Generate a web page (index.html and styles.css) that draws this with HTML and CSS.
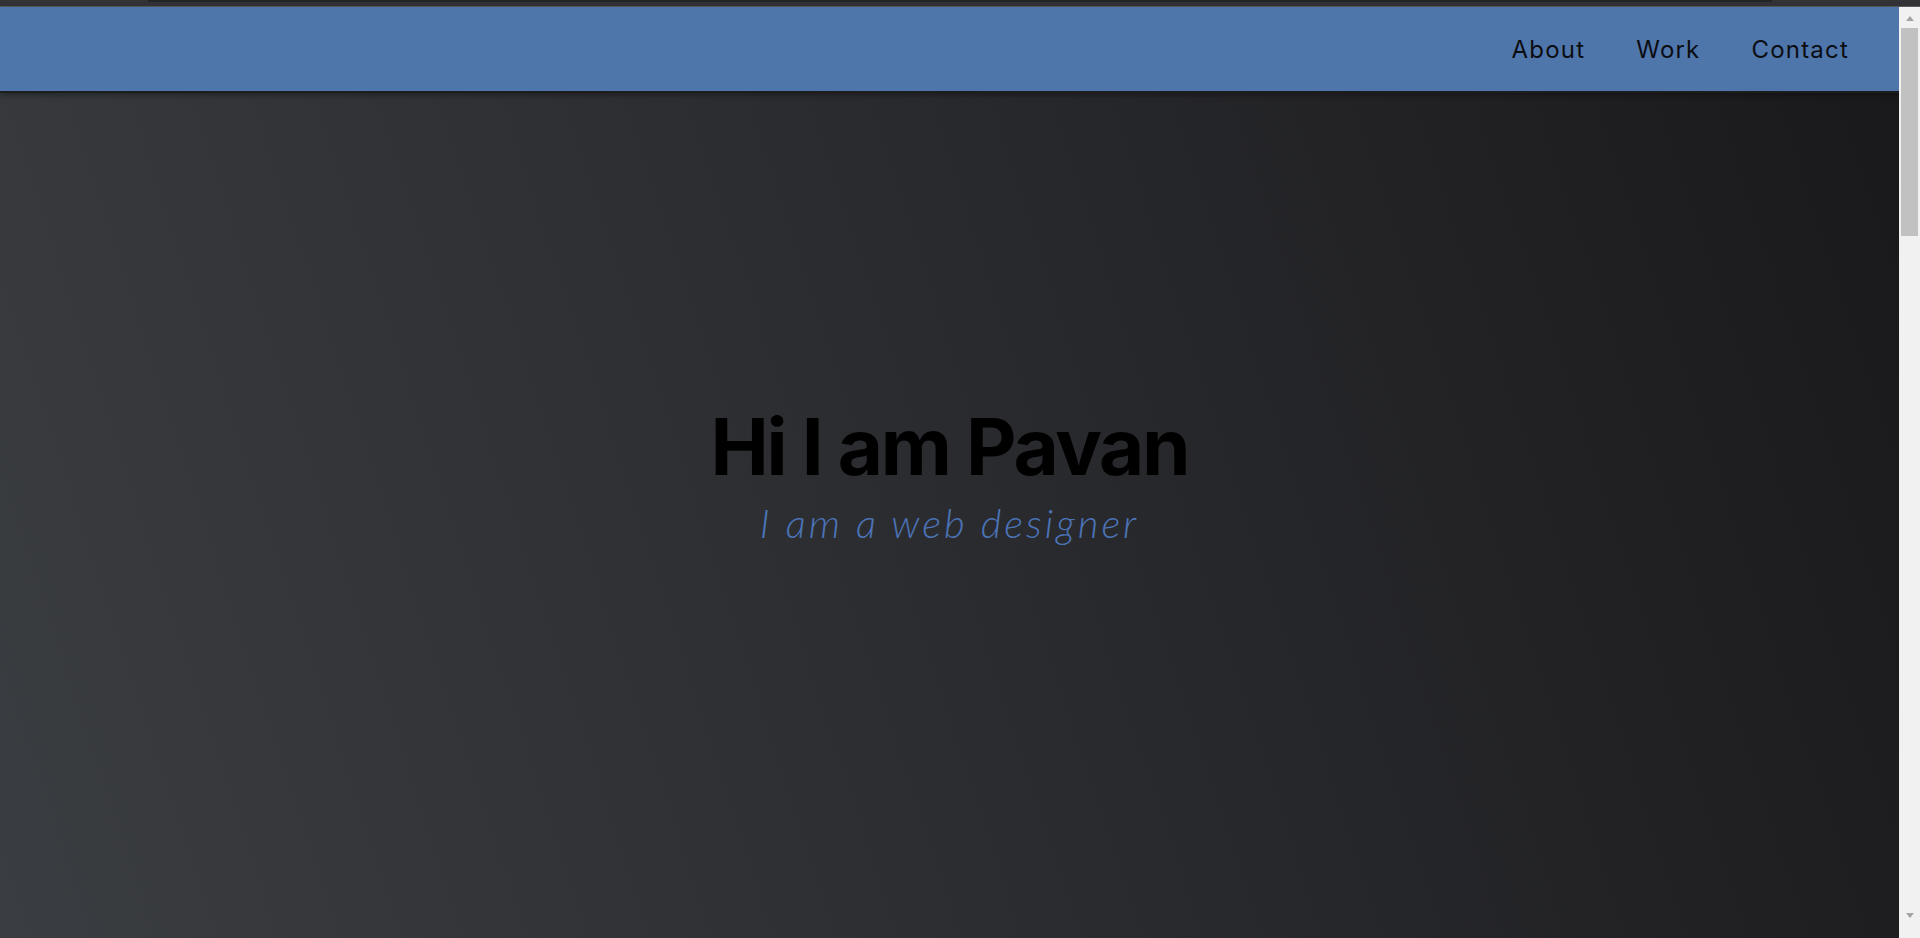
FILE: index.html
```html
<!DOCTYPE html>
<html lang="en">
<head>
<meta charset="utf-8">
<title>Pavan</title>
<link rel="stylesheet" href="styles.css">
</head>
<body>
<div class="frame">
  <div class="topstrip"><div class="seg"></div></div>
  <div class="window">
    <div class="page">
      <header class="nav">
        <ul class="menu">
          <li class="menu-item">About</li>
          <li class="menu-item">Work</li>
          <li class="menu-item">Contact</li>
        </ul>
      </header>
      <section class="hero">
        <h1 class="title">Hi I am Pavan</h1>
        <p class="subtitle">I am a web designer</p>
      </section>
    </div>
    <div class="scrollbar">
      <div class="sb-btn"><span class="tri up"></span></div>
      <div class="sb-track"><div class="sb-thumb"></div></div>
      <div class="sb-btn bottom"><span class="tri down"></span></div>
    </div>
  </div>
</div>
</body>
</html>
```

FILE: styles.css
```css
html, body {
  margin: 0;
  padding: 0;
  height: 938px;
  overflow: hidden;
  background: #333336;
}

.frame {
  display: flex;
  flex-direction: column;
  height: 938px;
}

.topstrip {
  height: 6px;
  flex: none;
  background: #333337;
  border-bottom: 1px solid #5c5c5e;
}

.seg {
  margin-left: 148px;
  width: 1624px;
  height: 2px;
  background: #222326;
}

.window {
  flex: 1;
  display: flex;
  min-height: 0;
}

.page {
  flex: 1;
  display: flex;
  flex-direction: column;
  min-width: 0;
  background: linear-gradient(72deg, #3a3d41 0%, #2c2d31 45%, #19191b 100%);
}

.nav {
  flex: none;
  height: 84px;
  background: #4f76aa;
  border-bottom: 2px solid #1c1d1f;
  box-shadow: 0 2px 6px rgba(0, 0, 0, 0.35);
  display: flex;
  justify-content: flex-end;
  align-items: center;
  padding-right: 50px;
}

.menu {
  list-style: none;
  margin: 0;
  padding: 0;
  display: flex;
  gap: 51px;
}

.menu-item {
  font-family: Inter, "Noto Sans", sans-serif;
  font-size: 24px;
  font-weight: 400;
  color: #0b0d12;
  letter-spacing: 1.2px;
}

.hero {
  flex: 1;
  display: flex;
  flex-direction: column;
  align-items: center;
  padding-top: 315px;
}

.title {
  margin: 0;
  font-family: Inter, "Noto Sans", sans-serif;
  font-weight: 700;
  font-size: 78px;
  line-height: 1;
  color: #000;
  letter-spacing: -2.2px;
}

.subtitle {
  margin: 13px 0 0;
  font-family: Lato, "Noto Sans", sans-serif;
  font-style: italic;
  font-weight: 300;
  font-size: 40px;
  color: #4b73b6;
  letter-spacing: 3px;
}

.scrollbar {
  flex: none;
  width: 21px;
  background: #f1f1f1;
  display: flex;
  flex-direction: column;
}

.sb-btn {
  flex: none;
  height: 21px;
  display: flex;
  justify-content: center;
  align-items: center;
}

.sb-btn.bottom {
  height: 26px;
  align-items: flex-start;
  padding-top: 1px;
  box-sizing: border-box;
}

.sb-track {
  flex: 1;
  padding: 0 2px 0 2px;
}

.sb-thumb {
  height: 208px;
  background: #c1c1c1;
}

.tri {
  width: 0;
  height: 0;
  border-left: 4.5px solid transparent;
  border-right: 4.5px solid transparent;
}

.tri.up {
  border-bottom: 5px solid #a3a3a3;
  margin-top: 2px;
}

.tri.down {
  border-top: 5px solid #a3a3a3;
}
```
